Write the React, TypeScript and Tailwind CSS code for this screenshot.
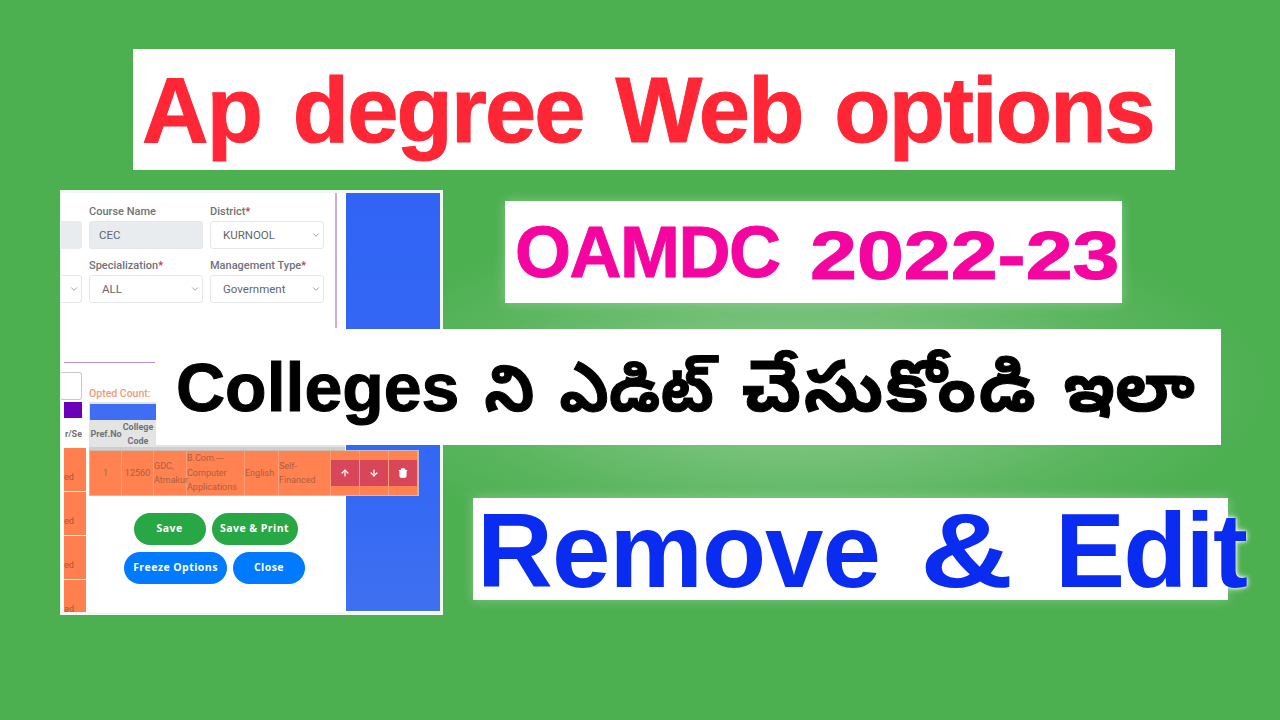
import { ArrowUp, ArrowDown, Trash2, ChevronDown } from "lucide-react";

function Field({ label, req, value, disabled }: { label: string; req?: boolean; value: string; disabled?: boolean }) {
  return (
    <div className="flex flex-col w-[114px]">
      <div className="h-[18px] text-[11px] leading-[18px] font-medium text-[#6f7378] whitespace-nowrap">
        {label}
        {req && <span className="text-[#c8324a]">*</span>}
      </div>
      <div className={`h-[28px] rounded-[3px] border border-[#e4e6ea] flex items-center justify-between pr-[2px] text-[11.5px] leading-[28px] text-[#63676c] ${disabled ? "bg-[#e9ecef] pl-[9px]" : "bg-white pl-[12px]"}`}>
        <span>{value}</span>
        {!disabled && <ChevronDown size={10} strokeWidth={1.5} />}
      </div>
    </div>
  );
}

function Cell({ w, children, cls = "" }: { w: string; children?: React.ReactNode; cls?: string }) {
  return <div className={`${w} h-full flex items-center border-r border-[#ff9f78] text-[9px] leading-[14.5px] text-[#ad5f42] ${cls}`}>{children}</div>;
}

function Action({ children }: { children: React.ReactNode }) {
  return (
    <div className="w-[29px] h-full flex items-center border-r border-[#ff9f78]">
      <div className="w-full h-[26px] bg-[#d84659] flex items-center justify-center text-white">{children}</div>
    </div>
  );
}

function Pill({ w, cls, children }: { w: string; cls: string; children: string }) {
  return <div className={`${w} h-[32px] rounded-full flex items-center justify-center text-white text-[10.5px] font-bold tracking-[0.45px] font-['Open_Sans',sans-serif] ${cls}`}>{children}</div>;
}

export default function App() {
  return (
    <div className="relative w-[1280px] h-[720px] overflow-hidden bg-[#4caf50] font-['Liberation_Sans',sans-serif]">
      <div className="absolute inset-0 bg-[radial-gradient(ellipse_470px_175px_at_800px_387px,#8ccf8f_0%,#78c27b_35%,#5cb660_70%,#4caf50_100%)]" />

      {/* screenshot collage */}
      <div className="absolute left-[60px] top-[190px] w-[383px] h-[425px] bg-white border-[3px] border-l-[1px] border-[#f2f8f2] overflow-hidden font-['Roboto',sans-serif]">
        <div className="absolute left-[285px] top-0 w-[94px] h-[418px] bg-[linear-gradient(180deg,#3164f4_0%,#3468f5_70%,#3f70f0_100%)]" />
        <div className="absolute left-[274px] top-0 w-[2px] h-[135px] bg-[#c9afd9]" />
        <div className="absolute left-0 top-[28px] w-[21px] h-[28px] rounded-r-[3px] bg-[#e9ecef]" />
        <div className="absolute left-0 top-[82px] w-[21px] h-[28px] rounded-r-[3px] border border-l-0 border-[#e4e6ea] flex items-center justify-end pr-[2px] text-[#63676c]">
          <ChevronDown size={10} strokeWidth={1.5} />
        </div>
        <div className="absolute left-[28px] top-[10px] grid grid-cols-[114px_114px] gap-x-[7px] gap-y-[8px]">
          <Field label="Course Name" value="CEC" disabled />
          <Field label="District" req value="KURNOOL" />
          <Field label="Specialization" req value="ALL" />
          <Field label="Management Type" req value="Government" />
        </div>

        <div className="absolute left-[3px] top-[169px] w-[91px] h-px bg-[#b58fd0]" />
        <div className="absolute left-0 top-[179px] w-[21px] h-[28px] rounded-r-[3px] border border-l-0 border-[#c9c9c9]" />
        <div className="absolute left-[28px] top-[193px] text-[10.5px] font-medium text-[#ee9b76] whitespace-nowrap">Opted Count:</div>
        <div className="absolute left-[3px] top-[209px] w-[18px] h-[16px] bg-[#6a00b8]" />
        <div className="absolute left-[3px] top-[235px] w-[18px] text-[9px] font-bold text-[#6f7378] overflow-hidden whitespace-nowrap text-right">r/Se</div>
        <div className="absolute left-[3px] top-[255px] w-[22px] flex flex-col gap-px">
          {["ed", "ed", "ed", "ad"].map((t, i) => (
            <div key={i} className="h-[43px] bg-[#ff7f4f] flex items-end pb-[7px] text-[9px] text-[#a8583c]">{t}</div>
          ))}
        </div>

        {/* table */}
        <div className="absolute left-[28px] top-[209px] w-[256px] h-[45px] bg-[#e4e4e4]" />
        <div className="absolute left-[29px] top-[211px] w-[255px] h-[16px] bg-[#3f6df3]" />
        <div className="absolute left-[29px] top-[227px] flex h-[27px] text-[9px] font-bold text-[#6f7378] text-center leading-[14px]">
          <div className="w-[32px] flex items-center justify-center">Pref.No</div>
          <div className="w-[32px]">College Code</div>
          <div className="w-[33px] flex items-end justify-center leading-[9px]">Name</div>
        </div>
        <div className="absolute left-[28px] top-[254px] w-[256px] h-[4px] bg-[#d2cdc9]" />
        <div className="absolute left-[29px] top-[258px] h-[44px] flex bg-[#ff8250] outline outline-1 outline-[#c8bcb8]">
          <Cell w="w-[32px]" cls="justify-center">1</Cell>
          <Cell w="w-[32px]" cls="justify-center">12560</Cell>
          <Cell w="w-[33px]">GDC, Atmakur</Cell>
          <Cell w="w-[58px]">B.Com.--- Computer Applications</Cell>
          <Cell w="w-[34px]">English</Cell>
          <Cell w="w-[52px]">Self-Financed</Cell>
          <Action><ArrowUp size={10} strokeWidth={3} /></Action>
          <Action><ArrowDown size={10} strokeWidth={3} /></Action>
          <Action><Trash2 size={10} strokeWidth={3} fill="white" /></Action>
        </div>

        {/* buttons */}
        <div className="absolute left-[63px] top-[320px] w-[181px] flex flex-col items-center gap-[7px]">
          <div className="flex gap-[6px] translate-x-[1px]">
            <Pill w="w-[72px]" cls="bg-[#28a745]">Save</Pill>
            <Pill w="w-[86px]" cls="bg-[#28a745]">Save &amp; Print</Pill>
          </div>
          <div className="flex gap-[6px]">
            <Pill w="w-[103px]" cls="bg-[#007bff]">Freeze Options</Pill>
            <Pill w="w-[72px]" cls="bg-[#007bff]">Close</Pill>
          </div>
        </div>
      </div>

      {/* banners */}
      <div className="absolute left-[133px] top-[49px] w-[1042px] h-[121px] bg-white flex items-center pl-[9px] whitespace-nowrap text-[92px] font-bold text-[#ff2636] tracking-[-1.8px] [word-spacing:8px] [-webkit-text-stroke:1px_#ff2636]">
        Ap degree Web options
      </div>
      <div className="absolute left-[505px] top-[201px] w-[617px] h-[102px] bg-white shadow-[0_0_12px_rgba(255,255,255,0.3)] flex items-baseline pt-[15px] pl-[10px] leading-none whitespace-nowrap font-bold text-[#f505a0] [-webkit-text-stroke:1px_#f505a0]">
        <span className="w-[295px] shrink-0 text-[72px] tracking-[-1.5px]">OAMDC</span>
        <span className="inline-block origin-left scale-x-[1.24] translate-y-[2px] text-[68px]">2022-23</span>
      </div>
      <div className="absolute left-[156px] top-[329px] w-[1065px] h-[116px] bg-white flex items-center pl-[20px] whitespace-nowrap font-bold text-black [-webkit-text-stroke:1px_#000] font-['Liberation_Sans','Noto_Sans_Telugu','Noto_Sans',sans-serif]">
        <div className="text-[64px] [word-spacing:7px]">
          <span className="text-[68px]">Colleges</span> ని ఎడిట్ <span className="ml-[3px] text-[71px] tracking-[2.5px]">చేసుకోండి</span> <span className="text-[70px]">ఇలా</span>
        </div>
      </div>
      <div className="absolute left-[473px] top-[498px] w-[755px] h-[102px] bg-white shadow-[0_0_12px_rgba(255,255,255,0.3)] flex items-center pl-[4px] pt-[3px] whitespace-nowrap text-[105px] font-bold text-[#0a2bf0] tracking-[-0.9px] [text-shadow:0_0_3px_#fff,0_0_6px_#fff]">
        <span className="w-[443px] shrink-0">Remove</span>
        <span className="w-[135px] shrink-0"><span className="inline-block origin-left scale-x-[1.23]">&amp;</span></span>
        <span className="shrink-0 tracking-[-1.8px]">Edit</span>
      </div>
    </div>
  );
}
